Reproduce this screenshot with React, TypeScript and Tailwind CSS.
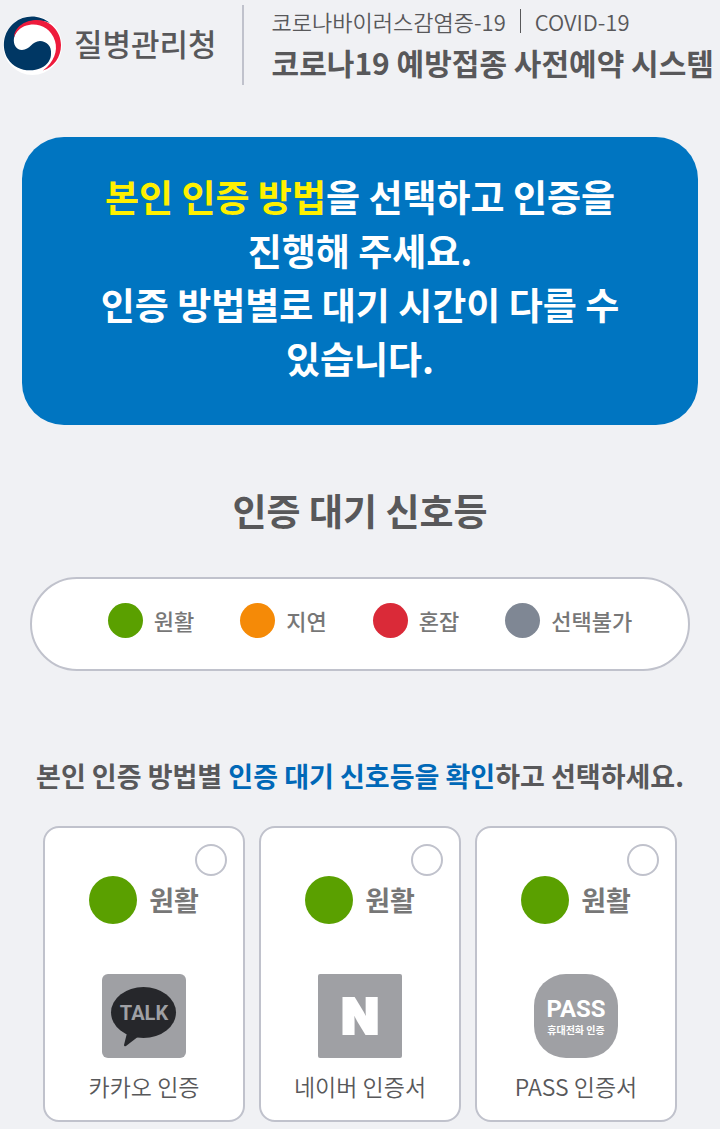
import React, { useState } from 'react';

const signals = [
  { label: '원활', color: 'bg-[#5aa000]' },
  { label: '지연', color: 'bg-[#f58a07]' },
  { label: '혼잡', color: 'bg-[#da2a38]' },
  { label: '선택불가', color: 'bg-[#7f8794]' },
];

function AgencyMark() {
  return (
    <svg viewBox="0 0 66 66" className="size-[66px] shrink-0" aria-hidden="true">
      <circle cx="32.5" cy="33.5" r="29.5" fill="#fff" />
      <path
        d="M50 11 C40 3 25 2 14 11 C3 20 1 36 8 47 C15 58 30 61 41 56 C48 53 51 47 51 42 C52 34 46 29 40 29 C32 29 30 38 22 38 C16 38 13 32 14 26 C17 12 36 5 50 11Z"
        fill="#003764"
      />
      <path
        d="M14 25 C15 14 26 8 37 8 C51 8 61 20 61 33 C61 45 54 55 43 58.500 C54 50 58 39 55 29 C51 16 39 11 29 13 C22 14 17 18 14 25Z"
        fill="#ee1b3c"
      />
    </svg>
  );
}

function KakaoIcon() {
  return (
    <svg viewBox="0 0 84 84" className="size-[84px]" aria-hidden="true">
      <rect width="84" height="84" rx="6" fill="#9fa0a4" />
      <ellipse cx="41.500" cy="38.500" rx="32.500" ry="25.500" fill="#26272b" />
      <path d="M25 59 L22 71 Q22 73 24 72 L37 62Z" fill="#26272b" />
      <text
        x="42"
        y="46"
        textAnchor="middle"
        fontSize="20"
        fill="#9fa0a4"
        className="font-bold"
        fontFamily="Roboto, sans-serif"
      >
        TALK
      </text>
    </svg>
  );
}

function NaverIcon() {
  return (
    <svg viewBox="0 0 84 84" className="size-[84px]" aria-hidden="true">
      <rect width="84" height="84" rx="2" fill="#9fa0a4" />
      <text
        x="42"
        y="60"
        textAnchor="middle"
        fontSize="49"
        fill="#fff"
        stroke="#fff"
        strokeWidth="2"
        className="font-black"
        fontFamily="Inter, sans-serif"
      >
        N
      </text>
    </svg>
  );
}

function PassIcon() {
  return (
    <svg viewBox="0 0 84 84" className="size-[84px]" aria-hidden="true">
      <rect width="84" height="84" rx="32" fill="#9fa0a4" />
      <text
        x="42"
        y="43"
        textAnchor="middle"
        fontSize="24"
        fill="#fff"
        className="font-bold"
        fontFamily="Roboto, sans-serif"
      >
        PASS
      </text>
      <text x="42" y="60" textAnchor="middle" fontSize="10" fill="#fff" className="font-bold">
        휴대전화 인증
      </text>
    </svg>
  );
}

const methods = [
  { id: 'kakao', label: '카카오 인증', icon: <KakaoIcon /> },
  { id: 'naver', label: '네이버 인증서', icon: <NaverIcon /> },
  { id: 'pass', label: 'PASS 인증서', icon: <PassIcon /> },
];

export default function App() {
  const [method, setMethod] = useState('');

  return (
    <div className="min-h-screen bg-[#f0f1f4] pb-2 font-['Noto_Sans_CJK_KR',sans-serif] text-[#58585a]">
      <header className="flex items-start pt-[5px]">
        <div className="flex h-20 items-center border-r-2 border-[#c0c2cc] pr-[25px]">
          <AgencyMark />
          <span className="ml-2 pb-1 text-[31px] leading-10 font-medium whitespace-nowrap">질병관리청</span>
        </div>
        <div className="ml-7 whitespace-nowrap">
          <p className="flex items-center text-[22px] leading-8 font-[350]">
            코로나바이러스감염증-19
            <span className="mx-[14px] h-6 w-px bg-[#58585a]" />
            COVID-19
          </p>
          <h1 className="text-[30px] leading-[50px] font-bold">코로나19 예방접종 사전예약 시스템</h1>
        </div>
      </header>

      <main>
        <div className="mx-[22px] mt-[50px] rounded-[42px] bg-[#0075c1] px-16 pt-8 pb-10 text-center text-[37px] leading-[54px] font-bold break-keep text-white">
          <p>
            <span className="inline-block text-[#fff000]">본인 인증 방법</span>을 선택하고 인증을 진행해 주세요.
          </p>
          <p>인증 방법별로 대기 시간이 다를 수 있습니다.</p>
        </div>

        <h2 className="mt-[58px] text-center text-[37px] leading-[54px] font-bold">인증 대기 신호등</h2>

        <ul className="mx-[30px] mt-10 flex justify-center gap-[46px] rounded-full border-2 border-[#c0c2cc] bg-white pt-[23px] pb-[31px] pl-5 text-[#777]">
          {signals.map((s) => (
            <li key={s.label} className="flex items-center gap-[11px] text-[22px] leading-9 font-medium">
              <span className={`size-[35px] rounded-full ${s.color}`} />
              {s.label}
            </li>
          ))}
        </ul>

        <h3 className="mt-[85px] text-center text-[27px] leading-10 font-bold whitespace-nowrap">
          본인 인증 방법별 <span className="text-[#0068b7]">인증 대기 신호등을 확인</span>하고 선택하세요.
        </h3>

        <div className="mx-[43px] mt-[30px] grid grid-cols-3 gap-[14px]">
          {methods.map((m) => (
            <label
              key={m.id}
              className="flex flex-col items-center rounded-2xl border-2 border-[#c0c2cc] bg-white px-4 pt-4 pb-[18px]"
            >
              <input
                type="radio"
                name="method"
                value={m.id}
                checked={method === m.id}
                onChange={(e) => setMethod(e.target.value)}
                className="size-8 appearance-none self-end rounded-full border-2 border-[#c0c2cc] checked:border-8 checked:border-[#0075c1]"
              />
              <span className="flex items-center gap-3 text-[27px] leading-[48px] font-bold text-[#777]">
                <span className="size-12 rounded-full bg-[#5aa000]" />
                원활
              </span>
              <span className="mt-[50px]">{m.icon}</span>
              <span className="mt-3 text-[23px] leading-8 font-[350] whitespace-nowrap">{m.label}</span>
            </label>
          ))}
        </div>
      </main>
    </div>
  );
}
